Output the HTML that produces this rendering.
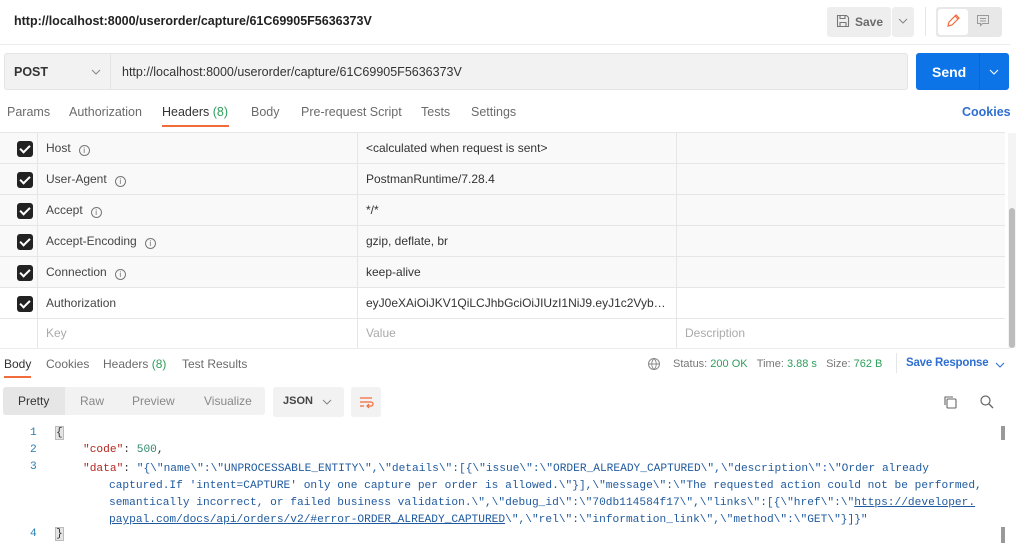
<!DOCTYPE html>
<html><head><meta charset="utf-8"><style>
*{margin:0;padding:0;box-sizing:border-box}
body{width:1024px;height:547px;overflow:hidden;background:#fff;font-family:"Liberation Sans",sans-serif;font-size:12px;color:#212121;position:relative}
.a{position:absolute;white-space:nowrap}
.g{color:#6b6b6b}
.row{position:absolute;left:0;width:1005px;height:31px;border-bottom:1px solid #e6e6e6}
.cb{position:absolute;left:17px;top:8px;width:16px;height:16px;background:#222;border-radius:3px}
.cb:after{content:"";position:absolute;left:5px;top:2px;width:4px;height:8px;border:solid #fff;border-width:0 2px 2px 0;transform:rotate(45deg)}
.k{position:absolute;left:46px;top:8px;color:#444}
.v{position:absolute;left:366px;top:8px;color:#333}
.i{display:inline-block;width:11px;height:11px;border:1px solid #777;border-radius:50%;font-size:8px;text-align:center;line-height:9px;margin-left:8px;color:#666;vertical-align:-1px}
.code{font-family:"Liberation Mono",monospace;font-size:11.2px;color:#1f5a9e}
.ln{color:#2a7fb5;font-family:"Liberation Mono",monospace;font-size:11.2px}
.key{color:#b3261e}
</style></head><body>
<div class="a" style="left:14px;top:14px;font-size:12.5px;font-weight:bold;color:#222">http://localhost:8000/userorder/capture/61C69905F5636373V</div>
<div class="a" style="left:827px;top:7px;width:64px;height:30px;background:#eee;border-radius:3px"></div>
<svg class="a" style="left:836px;top:14px" width="14" height="14" viewBox="0 0 14 14"><path d="M1.5 1.5h9l2 2v9h-11z M4 1.5v3h5v-3 M4 12.5v-4h6v4" fill="none" stroke="#777" stroke-width="1.1"/></svg>
<div class="a" style="left:855px;top:15px;font-size:12px;font-weight:bold;color:#6b6b6b">Save</div>
<div class="a" style="left:892px;top:7px;width:22px;height:30px;background:#eee;border-radius:3px"></div>
<svg class="a" style="left:898px;top:17px" width="10" height="8"><path d="M1 2l4 4 4-4" fill="none" stroke="#888" stroke-width="1.1"/></svg>
<div class="a" style="left:925px;top:7px;width:1px;height:29px;background:#e6e6e6"></div>
<div class="a" style="left:936px;top:7px;width:66px;height:30px;background:#e8e8e8;border-radius:3px"></div>
<div class="a" style="left:938px;top:9px;width:30px;height:26px;background:#fff;border-radius:3px"></div>
<svg class="a" style="left:946px;top:14px" width="14" height="14"><path d="M2 12l1-4 7-7 3 3-7 7z M9 2l3 3" fill="none" stroke="#f26b3a" stroke-width="1.2"/></svg>
<svg class="a" style="left:976px;top:14px" width="14" height="14"><path d="M1.5 1.5h11v8h-6l-2 2v-2h-3z M4 4.5h6 M4 7h6" fill="none" stroke="#999" stroke-width="1"/></svg>
<div class="a" style="left:0;top:44px;width:1010px;height:1px;background:#ececec"></div>
<div class="a" style="left:4px;top:53px;width:904px;height:37px;background:#f2f2f2;border:1px solid #e4e4e4;border-radius:3px"></div>
<div class="a" style="left:110px;top:54px;width:1px;height:35px;background:#e4e4e4"></div>
<div class="a" style="left:14px;top:65px;font-size:12.5px;font-weight:bold;color:#333">POST</div>
<svg class="a" style="left:91px;top:68px" width="10" height="8"><path d="M1 2l4 4 4-4" fill="none" stroke="#888" stroke-width="1.1"/></svg>
<div class="a" style="left:122px;top:65px;font-size:12.5px;color:#333">http://localhost:8000/userorder/capture/61C69905F5636373V</div>
<div class="a" style="left:916px;top:53px;width:93px;height:37px;background:#0d74e7;border-radius:3px"></div>
<div class="a" style="left:979px;top:53px;width:1px;height:37px;background:#0b66cc"></div>
<div class="a" style="left:932px;top:64px;font-size:14px;font-weight:bold;color:#fff">Send</div>
<svg class="a" style="left:989px;top:68px" width="10" height="8"><path d="M1 2l4 4 4-4" fill="none" stroke="#fff" stroke-width="1.1"/></svg>
<div class="a g" style="left:7px;top:105px;font-size:12.5px">Params</div>
<div class="a g" style="left:69px;top:105px;font-size:12.5px">Authorization</div>
<div class="a" style="left:162px;top:105px;font-size:12.5px;color:#333">Headers <span style="color:#2e9e5b">(8)</span></div>
<div class="a" style="left:162px;top:125px;width:67px;height:2px;background:#f26b3a"></div>
<div class="a g" style="left:251px;top:105px;font-size:12.5px">Body</div>
<div class="a g" style="left:301px;top:105px;font-size:12.5px">Pre-request Script</div>
<div class="a g" style="left:421px;top:105px;font-size:12.5px">Tests</div>
<div class="a g" style="left:471px;top:105px;font-size:12.5px">Settings</div>
<div class="a" style="left:962px;top:105px;font-size:12.5px;font-weight:bold;color:#2f6fd0">Cookies</div>
<div class="a" style="left:0;top:130px;width:1005px;height:3px;background:#fff;border-bottom:1px solid #e6e6e6"></div>
<div class="row" style="top:133px;background:#f9f9f9"><div class="cb"></div><div class="k">Host<span class="i">i</span></div><div class="v">&lt;calculated when request is sent&gt;</div></div>
<div class="row" style="top:164px;background:#f9f9f9"><div class="cb"></div><div class="k">User-Agent<span class="i">i</span></div><div class="v">PostmanRuntime/7.28.4</div></div>
<div class="row" style="top:195px;background:#f9f9f9"><div class="cb"></div><div class="k">Accept<span class="i">i</span></div><div class="v">*/*</div></div>
<div class="row" style="top:226px;background:#f9f9f9"><div class="cb"></div><div class="k">Accept-Encoding<span class="i">i</span></div><div class="v">gzip, deflate, br</div></div>
<div class="row" style="top:257px;background:#f9f9f9"><div class="cb"></div><div class="k">Connection<span class="i">i</span></div><div class="v">keep-alive</div></div>
<div class="row" style="top:288px"><div class="cb"></div><div class="k">Authorization</div><div class="v" style="width:306px;overflow:hidden;text-overflow:ellipsis">eyJ0eXAiOiJKV1QiLCJhbGciOiJIUzI1NiJ9.eyJ1c2VybmFtZSI6</div></div>
<div class="row" style="top:318px;height:30px;border:none"><div class="k" style="color:#aaa">Key</div><div class="v" style="color:#aaa">Value</div><div class="a" style="left:685px;top:8px;color:#aaa">Description</div></div>
<div class="a" style="left:37px;top:133px;width:1px;height:215px;background:#e6e6e6"></div>
<div class="a" style="left:357px;top:133px;width:1px;height:215px;background:#e6e6e6"></div>
<div class="a" style="left:676px;top:133px;width:1px;height:215px;background:#e6e6e6"></div>
<div class="a" style="left:1008px;top:133px;width:8px;height:215px;background:#f4f4f4"></div>
<div class="a" style="left:1009px;top:208px;width:6px;height:140px;background:#bcbcbc;border-radius:3px"></div>
<div class="a" style="left:0;top:348px;width:1010px;height:1px;background:#ececec"></div>
<div class="a" style="left:4px;top:357px;font-size:12px;color:#333">Body</div>
<div class="a" style="left:4px;top:376px;width:27px;height:2px;background:#f26b3a"></div>
<div class="a g" style="left:46px;top:357px">Cookies</div>
<div class="a g" style="left:103px;top:357px">Headers <span style="color:#2e9e5b">(8)</span></div>
<div class="a g" style="left:182px;top:357px">Test Results</div>
<svg class="a" style="left:647px;top:357px" width="14" height="14"><circle cx="7" cy="7" r="5.5" fill="none" stroke="#888"/><path d="M1.5 7h11 M7 1.5c-3 3-3 8 0 11 M7 1.5c3 3 3 8 0 11" fill="none" stroke="#888" stroke-width=".9"/></svg>
<div class="a" style="left:673px;top:358px;font-size:11px;color:#777">Status: <span style="color:#2e9e5b">200 OK</span>&nbsp;&nbsp;&nbsp;Time: <span style="color:#2e9e5b">3.88 s</span>&nbsp;&nbsp;&nbsp;Size: <span style="color:#2e9e5b">762 B</span></div>
<div class="a" style="left:896px;top:353px;width:1px;height:20px;background:#e6e6e6"></div>
<div class="a" style="left:906px;top:357px;font-size:11.5px;font-weight:bold;color:#2f6fd0;letter-spacing:-0.2px">Save Response</div>
<svg class="a" style="left:995px;top:361px" width="10" height="8"><path d="M1 2l4 4 4-4" fill="none" stroke="#2f6fd0" stroke-width="1.1"/></svg>
<div class="a" style="left:3px;top:387px;width:262px;height:28px;background:#f2f2f2;border-radius:3px"></div>
<div class="a" style="left:3px;top:387px;width:62px;height:28px;background:#e6e6e6;border-radius:3px 0 0 3px"></div>
<div class="a" style="left:18px;top:394px;color:#333">Pretty</div>
<div class="a g" style="left:80px;top:394px;color:#888">Raw</div>
<div class="a g" style="left:132px;top:394px;color:#888">Preview</div>
<div class="a g" style="left:204px;top:394px;color:#888">Visualize</div>
<div class="a" style="left:273px;top:387px;width:71px;height:30px;background:#f2f2f2;border-radius:3px"></div>
<div class="a" style="left:283px;top:395px;font-size:11px;font-weight:bold;color:#444">JSON</div>
<svg class="a" style="left:322px;top:398px" width="10" height="8"><path d="M1 2l4 4 4-4" fill="none" stroke="#888" stroke-width="1.1"/></svg>
<div class="a" style="left:351px;top:387px;width:30px;height:30px;background:#f2f2f2;border-radius:3px"></div>
<svg class="a" style="left:358px;top:394px" width="16" height="16"><path d="M2 4h12 M2 8h11a2 2 0 0 1 0 4h-4 M11 10l-2 2 2 2 M2 12h4" fill="none" stroke="#f26b3a" stroke-width="1.2"/></svg>
<svg class="a" style="left:942px;top:394px" width="16" height="16"><rect x="5" y="5" width="9" height="9" rx="1" fill="none" stroke="#666" stroke-width="1.1"/><path d="M3 11V3h8" fill="none" stroke="#666" stroke-width="1.1"/></svg>
<svg class="a" style="left:979px;top:394px" width="16" height="16"><circle cx="6.5" cy="6.5" r="4.5" fill="none" stroke="#666" stroke-width="1.2"/><path d="M10 10l4 4" stroke="#666" stroke-width="1.3"/></svg>
<div class="a ln" style="left:30px;top:427px">1</div>
<div class="a ln" style="left:30px;top:444px">2</div>
<div class="a ln" style="left:30px;top:461px">3</div>
<div class="a ln" style="left:30px;top:528px">4</div>
<div class="a code" style="left:56px;top:427px;color:#333;background:#e4e4e4;outline:1px solid #bbb">{</div>
<div class="a code" style="left:83px;top:444px"><span class="key">"code"</span><span style="color:#333">: </span><span style="color:#2e8b6b">500</span><span style="color:#333">,</span></div>
<div class="a code" style="left:83px;top:461px;line-height:17px"><span class="key">"data"</span><span style="color:#333">: </span>"{\"name\":\"UNPROCESSABLE_ENTITY\",\"details\":[{\"issue\":\"ORDER_ALREADY_CAPTURED\",\"description\":\"Order already</div>
<div class="a code" style="left:109px;top:478px;line-height:17px">captured.If 'intent=CAPTURE' only one capture per order is allowed.\"}],\"message\":\"The requested action could not be performed,<br>semantically incorrect, or failed business validation.\",\"debug_id\":\"70db114584f17\",\"links\":[{\"href\":\"<u>https://developer.</u><br><u>paypal.com/docs/api/orders/v2/#error-ORDER_ALREADY_CAPTURED</u>\",\"rel\":\"information_link\",\"method\":\"GET\"}]}"</div>
<div class="a code" style="left:56px;top:528px;color:#333;background:#e4e4e4;outline:1px solid #bbb">}</div>
<div class="a" style="left:1001px;top:426px;width:4px;height:14px;background:#999"></div>
<div class="a" style="left:1001px;top:527px;width:4px;height:16px;background:#999"></div>
</body></html>
